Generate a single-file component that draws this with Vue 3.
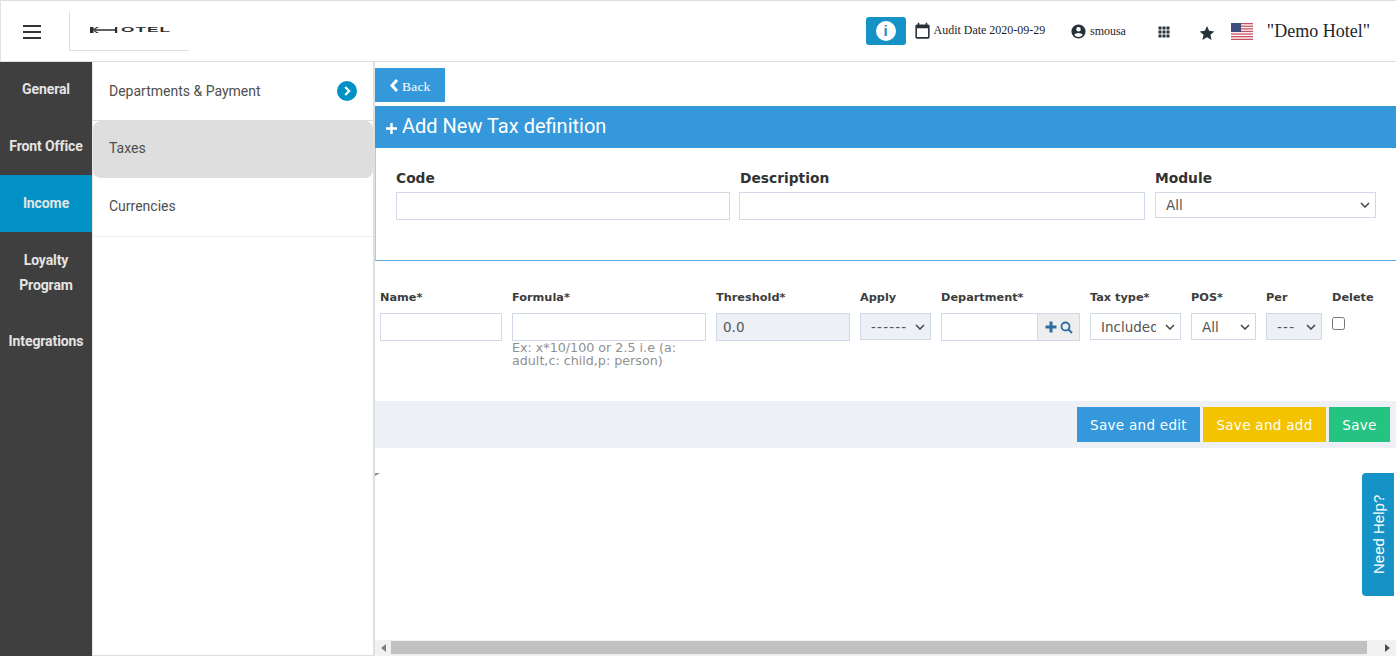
<script setup>
const rail = [
  { label: 'General', h: 57, pad: 15 },
  { label: 'Front Office', h: 56, pad: 15 },
  { label: 'Income', h: 57, pad: 16, active: true },
  { label: 'Loyalty Program', h: 82, pad: 16 },
  { label: 'Integrations', h: 50, pad: 15 }
]
const subs = [
  { label: 'Departments & Payment', arrow: true },
  { label: 'Taxes', active: true },
  { label: 'Currencies' }
]
</script>

<template>
  <div class="app">
    <header class="top">
      <button class="burger" aria-label="Menu"><span></span><span></span><span></span></button>
      <div class="logo">
        <svg class="logo-h" width="31" height="8" viewBox="0 0 31 8"><path d="M0 1h3.500v6H0zM3 3.200h23v1.600H3zM3 3.500l3.500-2.500h2.500L3.500 4zM3 4.500l3.500 2.500h2.500L3.500 4zM25 1h2.200v6H25z" fill="#2e2e2e"/></svg>
        <span class="logo-t">OTEL</span>
      </div>
      <div class="top-right">
        <button class="info" aria-label="Info"><span class="info-i">i</span></button>
        <svg class="cal" width="19" height="19" viewBox="0 0 24 24"><path fill="#263238" d="M19 3h-1V1h-2v2H8V1H6v2H5a2 2 0 0 0-2 2v14a2 2 0 0 0 2 2h14a2 2 0 0 0 2-2V5a2 2 0 0 0-2-2zm0 16H5V8h14z"/></svg>
        <span class="audit">Audit Date 2020-09-29</span>
        <svg class="user" width="17" height="17" viewBox="0 0 24 24"><path fill="#263238" d="M12 2a10 10 0 1 0 0 20 10 10 0 0 0 0-20zm0 3.600a3.200 3.200 0 1 1 0 6.400 3.200 3.200 0 0 1 0-6.400zM12 19.800a7.800 7.800 0 0 1-6-2.800c.4-1.900 4-2.900 6-2.900s5.600 1 6 2.900a7.800 7.800 0 0 1-6 2.800z"/></svg>
        <span class="uname">smousa</span>
        <svg class="apps" width="12" height="12" viewBox="0 0 12 12" fill="#263238"><rect x="0.500" y="0.500" width="3" height="3"/><rect x="4.500" y="0.500" width="3" height="3"/><rect x="8.500" y="0.500" width="3" height="3"/><rect x="0.500" y="4.500" width="3" height="3"/><rect x="4.500" y="4.500" width="3" height="3"/><rect x="8.500" y="4.500" width="3" height="3"/><rect x="0.500" y="8.500" width="3" height="3"/><rect x="4.500" y="8.500" width="3" height="3"/><rect x="8.500" y="8.500" width="3" height="3"/></svg>
        <svg class="star" width="16" height="16" viewBox="0 0 24 24"><path fill="#263238" d="M12 1.500l3.200 7.300 7.800.8-5.900 5.200 1.800 7.700-6.900-4.100-6.900 4.100 1.800-7.700L1 9.600l7.800-.8z"/></svg>
        <svg class="flag" width="22" height="17" viewBox="0 0 22 17">
          <rect width="22" height="17" fill="#fff"/>
          <g fill="#c8505f"><rect y="0" width="22" height="1.300"/><rect y="2.600" width="22" height="1.300"/><rect y="5.200" width="22" height="1.300"/><rect y="7.800" width="22" height="1.300"/><rect y="10.400" width="22" height="1.300"/><rect y="13" width="22" height="1.300"/><rect y="15.700" width="22" height="1.300"/></g>
          <rect width="10" height="9" fill="#3f4a7d"/>
        </svg>
        <span class="hotel">"Demo Hotel"</span>
      </div>
    </header>

    <div class="body">
      <nav class="rail">
        <a v-for="r in rail" :key="r.label" class="rail-item" :class="{ on: r.active }" :style="{ height: r.h + 'px', paddingTop: r.pad + 'px' }">{{ r.label }}</a>
      </nav>

      <aside class="subnav">
        <a v-for="s in subs" :key="s.label" class="sub" :class="{ on: s.active }">
          <span>{{ s.label }}</span>
          <span v-if="s.arrow" class="sub-arrow">
            <svg width="12" height="12" viewBox="0 0 12 12"><path d="M4.200 2L8.200 6 4.200 10" fill="none" stroke="#fff" stroke-width="2.200"/></svg>
          </span>
        </a>
      </aside>

      <main class="main">
        <div class="scroll">
          <button class="back">
            <svg width="10" height="15" viewBox="0 0 10 15"><path d="M8 2L3 7.500 8 13" fill="none" stroke="#fff" stroke-width="3"/></svg>
            <span>Back</span>
          </button>

          <h1 class="title">
            <svg class="plus" width="11" height="11" viewBox="0 0 11 11"><path d="M4.300 0h2.400v4.300H11v2.400H6.700V11H4.300V6.700H0V4.300h4.300z" fill="#fff"/></svg>
            <span>Add New Tax definition</span>
          </h1>

          <section class="card">
            <div><label>Code</label><input type="text" /></div>
            <div class="f-desc"><label>Description</label><input type="text" /></div>
            <div><label>Module</label><select class="sel-big"><option>All</option></select></div>
          </section>

          <section class="lines">
            <div class="cell"><label>Name*</label><input type="text" /></div>
            <div class="cell">
              <label>Formula*</label><input type="text" />
              <p class="hint">Ex: x*10/100 or 2.5 i.e (a: adult,c: child,p: person)</p>
            </div>
            <div class="cell"><label>Threshold*</label><input class="ro" type="text" value="0.0" /></div>
            <div class="cell"><label>Apply</label><select class="ro dash"><option>------</option></select></div>
            <div class="cell">
              <label>Department*</label>
              <div class="group">
                <input type="text" />
                <span class="addon">
                  <svg width="12" height="12" viewBox="0 0 12 12"><path d="M4.500 0.500h3v4h4v3h-4v4h-3v-4h-4v-3h4z" fill="#2e6da4"/></svg>
                  <svg width="13" height="13" viewBox="0 0 13 13"><circle cx="5.500" cy="5.500" r="4" fill="none" stroke="#2e6da4" stroke-width="1.800"/><path d="M8.500 8.500l3.500 3.500" stroke="#2e6da4" stroke-width="2"/></svg>
                </span>
              </div>
            </div>
            <div class="cell"><label>Tax type*</label><select><option>Included</option></select></div>
            <div class="cell"><label>POS*</label><select><option>All</option></select></div>
            <div class="cell"><label>Per</label><select class="ro dash"><option>---</option></select></div>
            <div class="cell"><label>Delete</label><input class="check" type="checkbox" /></div>
          </section>

          <footer class="actions">
            <button class="btn blue">Save and edit</button>
            <button class="btn yellow">Save and add</button>
            <button class="btn green">Save</button>
          </footer>
        </div>

        <i class="tick"></i>
        <a class="help">Need Help?</a>

        <div class="hbar">
          <i class="ar-l"></i>
          <div class="thumb"></div>
          <i class="ar-r"></i>
        </div>
      </main>
    </div>
  </div>
</template>

<style>
html, body { margin: 0; overflow: hidden; }
</style>

<style scoped>
* { box-sizing: border-box; }
.app { width: 1396px; height: 656px; display: flex; flex-direction: column; background: #fff; overflow: hidden; }

.top { height: 62px; flex: none; display: flex; align-items: flex-start; border-top: 1px solid #ddd; border-bottom: 1px solid #ddd; border-left: 1px solid #e2e2e2; }
.burger { width: 18px; height: 14px; margin: 24px 0 0 22px; padding: 0; border: 0; background: none; display: flex; flex-direction: column; justify-content: space-between; }
.burger span { display: block; height: 2px; background: #333; }
.logo { width: 120px; height: 40px; margin: 10px 0 0 28px; border-left: 1px solid #ddd; border-bottom: 1px solid #ddd; display: flex; align-items: center; padding: 0 0 1px 20px; }
.logo-t { font: bold 8px/8px "Liberation Sans", sans-serif; color: #2e2e2e; letter-spacing: 0.5px; transform: scaleX(2.150); transform-origin: left; }
.top-right { margin-left: auto; display: flex; align-items: center; height: 60px; padding-top: 1px; }
.info { width: 40px; height: 28px; margin-right: 8px; margin-top: -2px; border: 0; padding: 0; border-radius: 3px; background: #1593c6; display: flex; align-items: center; justify-content: center; }
.info-i { width: 20px; height: 20px; border-radius: 50%; background: #fff; color: #1593c6; font: bold 15px/20px "Liberation Sans", sans-serif; text-align: center; }
.cal { margin-right: 2px; margin-left: -1px; }
.audit { font: 12px "Liberation Serif", serif; color: #212529; margin-right: 25px; margin-top: -2px; letter-spacing: -0.02px; }
.user { margin-right: 3px; }
.uname { font: 12px "Liberation Serif", serif; color: #212529; margin-right: 32px; margin-top: -1px; letter-spacing: -0.05px; }
.apps { margin-right: 29px; }
.star { margin-right: 16px; margin-top: 2px; }
.flag { margin-right: 14px; margin-top: -1px; }
.hotel { font: 18px "Liberation Serif", serif; color: #212529; margin-right: 26px; margin-top: -1px; }

.body { flex: 1; display: flex; min-height: 0; }
.rail { width: 92px; flex: none; background: #3f3f3f; }
.rail-item { display: flex; align-items: flex-start; justify-content: center; text-align: center; padding: 0 14px; font: 700 14px/25px Roboto, sans-serif; color: #e4e4e4; letter-spacing: -0.1px; white-space: normal; }
.rail-item:nth-child(1), .rail-item:nth-child(2), .rail-item:nth-child(5) { padding-left: 0; padding-right: 0; }
.rail-item.on { background: #0191c5; }

.subnav { width: 283px; flex: none; border-left: 1px solid #e8e8e8; border-right: 2px solid #e0e0e0; border-bottom: 1px solid #ddd; }
.sub { height: 59px; display: flex; align-items: center; justify-content: space-between; padding: 0 16px 0 16px; border-bottom: 1px solid #dedede; font: 14px Roboto, sans-serif; color: #4e4e4e; }
.sub:last-child { padding-bottom: 3px; border-bottom-color: #eee; }
.sub.on { height: 57px; background: #dedede; border-radius: 8px; border-bottom: 0; padding-bottom: 3px; }
.sub-arrow { width: 20px; height: 20px; border-radius: 50%; background: #0191c5; display: flex; align-items: center; justify-content: center; }

.main { flex: 1; position: relative; min-width: 0; display: flex; flex-direction: column; }
.scroll { flex: 1; overflow: hidden; padding-top: 6px; }
.back { display: flex; align-items: center; gap: 3px; width: 70px; height: 34px; margin: 0; padding: 1px 0 0 14px; border: 0; background: #3498db; color: #fff; font: 13.500px "Liberation Serif", serif; letter-spacing: 0.2px; }
.back span { margin-top: 2px; }
.title { height: 42px; margin: 4px 0 0; padding: 0 0 2px 11px; display: flex; align-items: center; gap: 5px; background: #3498db; color: #fff; font: 400 20px Roboto, sans-serif; }
.plus { margin-top: 4px; }

.card { height: 113px; display: grid; grid-template-columns: 334px 405px 221px; column-gap: 10px; padding: 21px 0 0 20px; border-left: 1px solid #a9cdea; border-bottom: 1px solid #5aa6dd; align-items: start; }
.card > div { display: flex; flex-direction: column; }
.card label { font: 700 13.800px/18px "DejaVu Sans", sans-serif; color: #333; margin-bottom: 5px; }
.f-desc { margin-left: -1px; }
.f-desc label { margin-left: 1px; }
.sel-big { height: 26px; width: 221px; }

input[type="text"] { width: 100%; height: 28px; border: 1px solid #d2d9e6; background: #fff; padding: 0 6px; font: 13.500px "DejaVu Sans", sans-serif; color: #555; outline: 0; border-radius: 0; }
select { appearance: none; width: 100%; height: 27px; border: 1px solid #d2d9e6; padding: 0 24px 0 10px; font: 13.500px "DejaVu Sans", sans-serif; color: #555; outline: 0; border-radius: 0; background: #fff url("data:image/svg+xml,%3Csvg xmlns='http://www.w3.org/2000/svg' width='10' height='6' viewBox='0 0 10 6'%3E%3Cpath d='M1 1l4 4 4-4' fill='none' stroke='%23444' stroke-width='1.500'/%3E%3C/svg%3E") no-repeat right 5px center; }
select.ro { background-color: #edf0f5; }
select.dash { letter-spacing: 1.200px; padding-right: 16px; }
input[type="text"].ro { background: #edf0f5; }

.lines { display: grid; grid-template-columns: 122px 194px 134px 71px 139px 91px 65px 56px 50px; column-gap: 10px; padding: 30px 0 0 5px; height: 140px; align-items: start; }
.cell { display: flex; flex-direction: column; }
.cell label { font: 700 11.300px/14px "DejaVu Sans", sans-serif; color: #3d3d3d; margin-bottom: 8px; white-space: nowrap; }
.hint { margin: 0; font: 12.700px/13px "DejaVu Sans", sans-serif; color: #909090; }
.group { display: flex; }
.group input { flex: 1; min-width: 0; border-right: 0; }
.addon { width: 43px; height: 28px; flex: none; display: flex; align-items: center; justify-content: center; gap: 3px; background: #eeeeee; border: 1px solid #d2d9e6; }
.check { width: 13px; height: 13px; margin: 4px 0 0 0; }

.actions { height: 47px; display: flex; justify-content: flex-end; align-items: flex-start; gap: 3px; padding: 6px 6px 0 0; background: #edf0f5; }
.btn { height: 35px; border: 0; padding: 0; color: #fff; font: 13.500px "DejaVu Sans", sans-serif; letter-spacing: 0.3px; }
.blue { width: 123px; background: #3498db; }
.yellow { width: 123px; background: #f4c300; }
.green { width: 61px; background: #26c281; }

.tick { position: absolute; left: 0; top: 411px; width: 5px; height: 3px; background: #8f8f8f; clip-path: polygon(0 0, 100% 0, 0 100%); }
.help { position: absolute; left: 987px; top: 411px; width: 32px; height: 123px; background: #1593c6; color: #fff; font: 15px/34px "Liberation Sans", sans-serif; writing-mode: vertical-rl; transform: rotate(180deg); text-align: center; border-radius: 0 4px 4px 0; }

.hbar { height: 16px; flex: none; display: flex; align-items: center; background: #f1f1f1; margin-top: -16px; position: relative; }
.thumb { position: absolute; left: 16px; width: 976px; top: 1px; height: 13px; background: #c1c1c1; }
.ar-l { position: absolute; left: 6px; top: 4px; border: 4px solid transparent; border-left: 0; border-right: 5px solid #7f7f7f; }
.ar-r { position: absolute; right: 6px; top: 4px; border: 4px solid transparent; border-right: 0; border-left: 5px solid #505050; }
</style>
